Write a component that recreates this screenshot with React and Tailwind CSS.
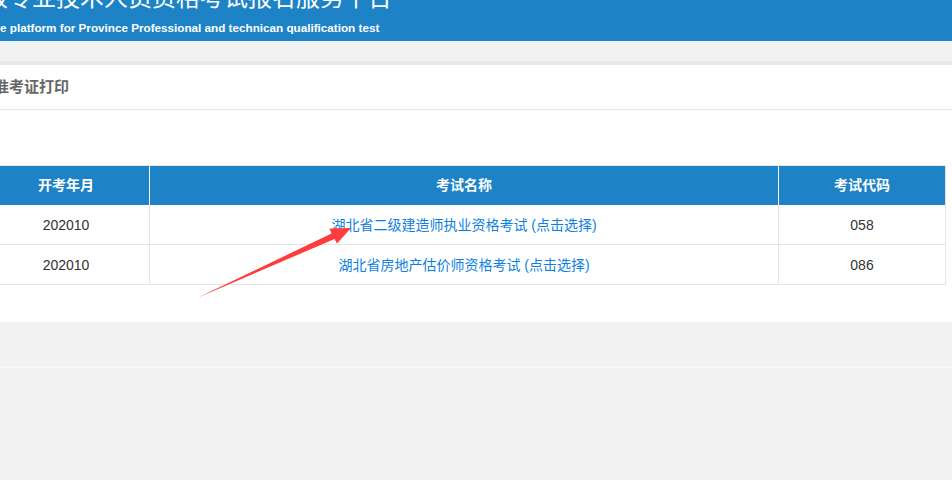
import React from 'react';

const exams = [
    { month: '202010', name: '湖北省二级建造师执业资格考试', code: '058' },
    { month: '202010', name: '湖北省房地产估价师资格考试', code: '086' },
];

const App = () => {
    return (
        <div className="relative h-[480px] w-[952px] overflow-hidden bg-[#f2f2f2] font-['Liberation_Sans','Noto_Sans_CJK_SC',sans-serif]">
            {/* Header (page is scrolled a little, so the top/left are cut) */}
            <header className="-mt-[16px] h-[57px] overflow-hidden bg-[#1e83c6] text-white">
                <h1 className="-ml-[88px] whitespace-nowrap font-['Noto_Sans_CJK_SC',sans-serif] text-[24px] font-normal leading-[24px]">
                    湖北省级专业技术人员资格考试报名服务平台
                </h1>
                <p className="mt-[12px] whitespace-nowrap text-[11.7px] font-bold leading-[16px]">
                    <span className="-ml-[300px] inline-block w-[300px] text-right">Online registration servic</span>e platform for Province Professional and technican qualification test
                </p>
            </header>

            <div className="h-[20px]" />
            <div className="h-[4px] bg-[#e6e9ec]" />

            {/* Panel */}
            <section className="h-[257px] bg-white">
                <div className="flex h-[45px] items-center border-b border-[#e8e8e8]">
                    <h2 className="-ml-[6px] whitespace-nowrap text-[15px] font-bold text-[#666]">准考证打印</h2>
                </div>

                <div className="pt-[55px]">
                    <table className="-ml-[18px] w-[964px] table-fixed border-separate border-spacing-0 border-t border-l border-[#e5e5e5] text-[14px]">
                        <colgroup>
                            <col className="w-[167px]" />
                            <col className="w-[629px]" />
                            <col className="w-[167px]" />
                        </colgroup>
                        <thead>
                            <tr className="bg-[#1e83c6] text-white">
                                <th className="h-[39px] border-r border-white font-bold">开考年月</th>
                                <th className="h-[39px] border-r border-white font-bold">考试名称</th>
                                <th className="h-[39px] border-r border-[#e5e5e5] font-bold">考试代码</th>
                            </tr>
                        </thead>
                        <tbody>
                            {exams.map((exam) => (
                                <tr key={exam.code}>
                                    <td className="h-[40px] border-r border-b border-[#e5e5e5] pt-[2px] text-center text-[#333]">{exam.month}</td>
                                    <td className="h-[40px] border-r border-b border-[#e5e5e5] pt-[2px] text-center">
                                        <a href="#" className="text-[#0e7fe1]">{exam.name} (点击选择)</a>
                                    </td>
                                    <td className="h-[40px] border-r border-b border-[#e5e5e5] pt-[2px] text-center text-[#333]">{exam.code}</td>
                                </tr>
                            ))}
                        </tbody>
                    </table>
                </div>
            </section>

            <div className="mt-[45px] border-t border-[#f7f7f7]" />

            {/* Red annotation arrow */}
            <svg className="pointer-events-none absolute inset-0" width="952" height="480" viewBox="0 0 952 480">
                <polygon
                    points="197,298 331.5,233.5 329.5,228.5 351,228 337,243.5 334.5,239"
                    fill="#ff3b3b"
                />
            </svg>
        </div>
    );
};

export default App;
